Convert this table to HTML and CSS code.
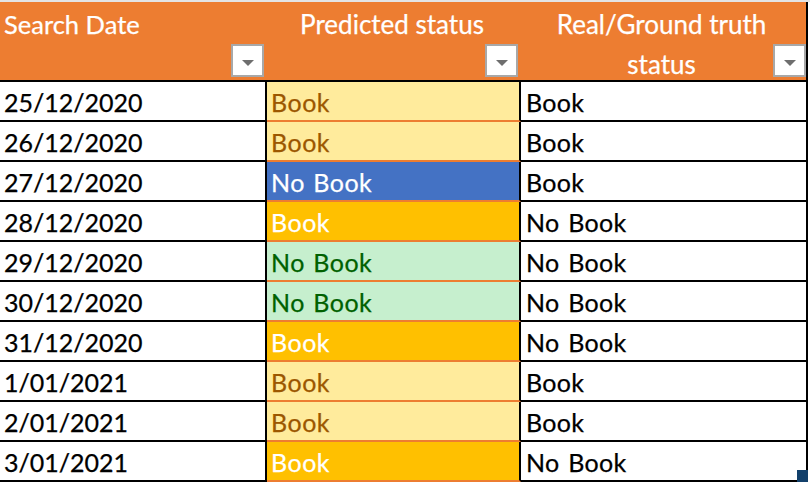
FILE: index.html
```html
<!DOCTYPE html>
<html>
<head>
<meta charset="utf-8">
<link rel="stylesheet" href="styles.css">
</head>
<body>
<div class="strip"></div>
<div class="sheet">
  <div class="hcell c1 left">Search Date<span class="filter"><span class="tri"></span></span></div>
  <div class="hcell c2">Predicted status<span class="filter"><span class="tri"></span></span></div>
  <div class="hcell c3 last">Real/Ground truth<br>status<span class="filter"><span class="tri"></span></span></div>

  <div class="cell c1">25/12/2020</div><div class="cell c2 neutral">Book</div><div class="cell c3">Book</div>
  <div class="cell c1">26/12/2020</div><div class="cell c2 neutral">Book</div><div class="cell c3">Book</div>
  <div class="cell c1">27/12/2020</div><div class="cell c2 blue">No Book</div><div class="cell c3">Book</div>
  <div class="cell c1">28/12/2020</div><div class="cell c2 gold">Book</div><div class="cell c3">No Book</div>
  <div class="cell c1">29/12/2020</div><div class="cell c2 good">No Book</div><div class="cell c3">No Book</div>
  <div class="cell c1">30/12/2020</div><div class="cell c2 good">No Book</div><div class="cell c3">No Book</div>
  <div class="cell c1">31/12/2020</div><div class="cell c2 gold">Book</div><div class="cell c3">No Book</div>
  <div class="cell c1">1/01/2021</div><div class="cell c2 neutral">Book</div><div class="cell c3">Book</div>
  <div class="cell c1">2/01/2021</div><div class="cell c2 neutral">Book</div><div class="cell c3">Book</div>
  <div class="cell c1">3/01/2021</div><div class="cell c2 gold">Book</div><div class="cell c3 lastcell">No Book<span class="handle"></span></div>
</div>
</body>
</html>
```

FILE: styles.css
```css
html, body {
  margin: 0;
  padding: 0;
  background: #ffffff;
}
body {
  font-family: Lato, "Open Sans", sans-serif;
  font-size: 25px;
  color: #000000;
  -webkit-text-stroke: 0.25px currentColor;
}
.strip {
  height: 2px;
  width: 810px;
  background: #e4e4e4;
}
.sheet {
  display: grid;
  grid-template-columns: 267px 254px 287px;
  width: 808px;
}
.hcell {
  position: relative;
  box-sizing: border-box;
  height: 80px;
  background: #ed7d31;
  color: #ffffff;
  border-bottom: 2px solid #000000;
  font-size: 26px;
  line-height: 40px;
  padding-top: 2px;
  text-align: center;
  white-space: nowrap;
}
.hcell.left {
  text-align: left;
  padding-left: 4px;
  font-size: 25.5px;
}
.hcell.c2 {
  padding-right: 4px;
}
.hcell.last {
  border-right: 2px solid #000000;
  padding-right: 4px;
}
.filter {
  position: absolute;
  right: 3px;
  top: 42px;
  width: 33px;
  height: 33px;
  box-sizing: border-box;
  background: #ffffff;
  border: 2px solid #a8a8a8;
  display: flex;
  align-items: center;
  justify-content: center;
  -webkit-text-stroke: 0;
}
.hcell.last .filter {
  right: 0px;
}
.tri {
  display: block;
  width: 0;
  height: 0;
  margin-top: 4px;
  border-left: 6px solid transparent;
  border-right: 6px solid transparent;
  border-top: 6px solid #6e6e6e;
}
.cell {
  position: relative;
  box-sizing: border-box;
  height: 40px;
  line-height: 35px;
  padding-top: 3px;
  white-space: nowrap;
  border-bottom: 2px solid #000000;
}
.cell.c1 {
  padding-left: 4px;
  border-right: 2px solid #000000;
}
.cell.c2 {
  padding-left: 4px;
  border-right: 2px solid #000000;
  border-bottom: 2px solid #ed7d31;
  letter-spacing: 0.5px;
  word-spacing: 1.5px;
}
.cell.c3 {
  padding-left: 5px;
  border-right: 2px solid #000000;
  letter-spacing: 0.3px;
  word-spacing: 2px;
}
.neutral {
  background: #ffeb9c;
  color: #9c5700;
}
.blue {
  background: #4472c4;
  color: #ffffff;
}
.gold {
  background: #ffc000;
  color: #ffffff;
}
.good {
  background: #c6efce;
  color: #006100;
}
.handle {
  position: absolute;
  right: -2px;
  bottom: -2px;
  width: 11px;
  height: 12px;
  background: #12406b;
}
```
